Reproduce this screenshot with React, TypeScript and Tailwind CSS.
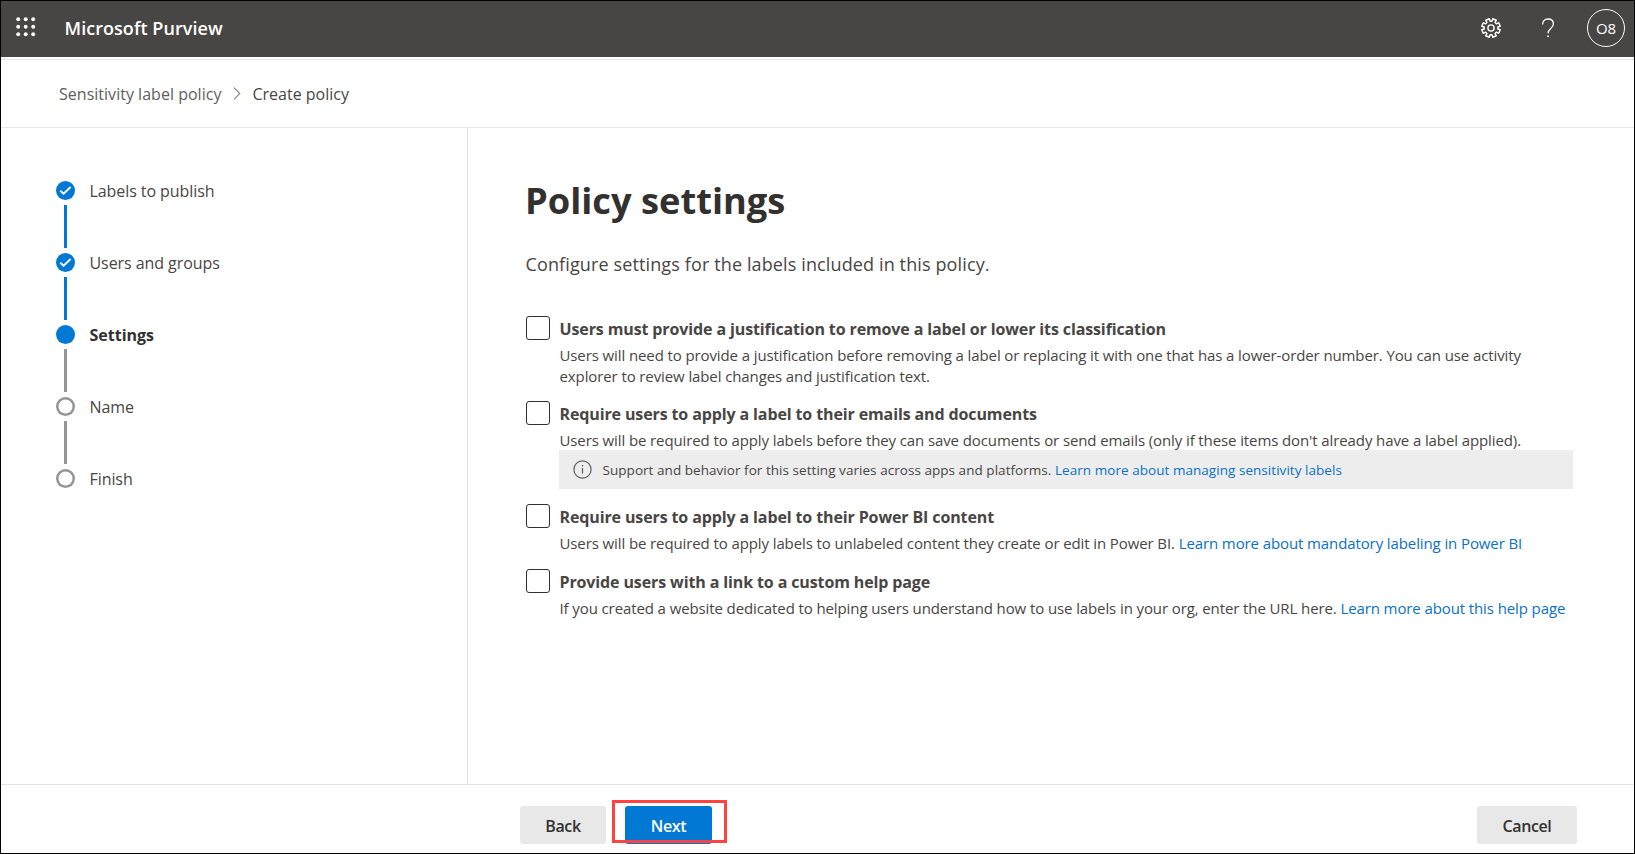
import type { ReactNode } from "react";

type StepState = "done" | "current" | "todo";

const steps: { label: string; state: StepState }[] = [
  { label: "Labels to publish", state: "done" },
  { label: "Users and groups", state: "done" },
  { label: "Settings", state: "current" },
  { label: "Name", state: "todo" },
  { label: "Finish", state: "todo" },
];

// Outline of an eight-tooth cog centred on the origin, with a notch at the top.
const cogPath = (() => {
  const pts: string[] = [];
  for (let i = 0; i < 8; i++) {
    const mid = 22.5 + i * 45;
    const corners: [number, number][] = [
      [mid - 14, 6.9],
      [mid - 12, 9.4],
      [mid + 12, 9.4],
      [mid + 14, 6.9],
    ];
    for (const [deg, r] of corners) {
      const a = (deg * Math.PI) / 180;
      pts.push(`${(r * Math.cos(a)).toFixed(2)} ${(r * Math.sin(a)).toFixed(2)}`);
    }
  }
  return `M${pts.join("L")}Z`;
})();

function Waffle() {
  return (
    <svg width="20" height="20" viewBox="0 0 20 20" fill="white">
      {[2.2, 9.7, 17.2].map((y) =>
        [2.2, 9.7, 17.2].map((x) => <circle key={`${x}-${y}`} cx={x} cy={y} r="1.95" />)
      )}
    </svg>
  );
}

function Header() {
  return (
    <header className="flex h-14 shrink-0 items-center bg-[#484644] pr-[9px] pl-[15px] text-white">
      <div className="mb-1 flex">
        <Waffle />
      </div>
      <h1 className="mb-[2px] ml-[28.5px] text-lg leading-6 font-semibold tracking-[0.05px]">Microsoft Purview</h1>
      <div className="mb-[2px] ml-auto flex items-center">
        <svg className="mb-px" width="22" height="22" viewBox="-11 -11 22 22" fill="none" stroke="white" strokeWidth="1.4" strokeLinejoin="round">
          <path d={cogPath} />
          <circle r="3.1" />
        </svg>
        <svg className="ml-[39px]" width="14" height="20" viewBox="0 0 14 20" fill="none" stroke="white" strokeWidth="1.3">
          <path d="M1.6 6.4C1.6 3 3.8 1 7 1s5.4 1.9 5.4 4.9c0 4.4-5.4 4.8-5.4 9.4" />
          <path d="M7 17.4v1.7" strokeWidth="1.7" />
        </svg>
        <div className="ml-[32px] flex size-[38px] items-center justify-center rounded-full border border-white text-[15px] leading-5 tracking-[-0.1px]">
          O8
        </div>
      </div>
    </header>
  );
}

function Breadcrumb() {
  return (
    <nav className="mt-[2px] flex h-[69px] shrink-0 items-center border-y border-[#e6e6e6] pl-[58px] text-base leading-6">
      <span className="tracking-[0.02px] text-[#605e5c]">Sensitivity label policy</span>
      <svg className="ml-[12px]" width="8" height="13" viewBox="0 0 8 13" fill="none" stroke="#8a8886" strokeWidth="1.1">
        <path d="M1 0.7L6.8 6.5L1 12.3" />
      </svg>
      <span className="ml-[11px] text-[#484644]">Create policy</span>
    </nav>
  );
}

function StepDot({ state }: { state: StepState }) {
  if (state === "todo") return <span className="size-[19px] rounded-full shadow-[inset_0_0_0_2.5px_#979593]" />;
  return (
    <span className="flex size-[19px] items-center justify-center rounded-full bg-[#0078d4]">
      {state === "done" && (
        <svg width="13" height="11" viewBox="0 0 13 11" fill="none" stroke="white" strokeWidth="1.9">
          <path d="M1.3 5.7L4.6 8.7L11.6 2" />
        </svg>
      )}
    </span>
  );
}

function Steps() {
  return (
    <aside className="w-[467px] shrink-0 border-r border-[#e3e3e3] pt-[53px] pl-[55px]">
      <ol>
        {steps.map((s, i) => (
          <li key={s.label}>
            <div className="flex h-[19px] items-center gap-[14.5px]">
              <StepDot state={s.state} />
              <span
                className={
                  s.state === "current"
                    ? "text-base leading-5 font-bold text-[#323130]"
                    : "text-base leading-5 tracking-[-0.07px] text-[#484644]"
                }
              >
                {s.label}
              </span>
            </div>
            {i < steps.length - 1 && (
              <div
                className={
                  s.state === "done"
                    ? "my-[5px] ml-2 h-[43px] w-[3px] bg-[#0078d4]"
                    : "my-[5px] ml-2 h-[43px] w-[3px] bg-[#979593]"
                }
              />
            )}
          </li>
        ))}
      </ol>
    </aside>
  );
}

function Link({ children }: { children: ReactNode }) {
  return (
    <a href="#" className="text-[#0b71c7]">
      {children}
    </a>
  );
}

function Setting({ title, children, note }: { title: string; children: ReactNode; note?: ReactNode }) {
  return (
    <div className="flex">
      <span role="checkbox" aria-checked="false" className="size-6 shrink-0 rounded-[3px] border border-[#323130]" />
      <div className="ml-[9px] grow pt-px">
        <h3 className="pl-[0.5px] text-base leading-6 font-bold tracking-[-0.12px] text-[#484644]">{title}</h3>
        <p className="mt-1 pl-[0.5px] text-[15px] leading-[21px] tracking-[-0.105px] whitespace-nowrap text-[#484644]">
          {children}
        </p>
        {note}
      </div>
    </div>
  );
}

function Note() {
  return (
    <div className="-mt-px flex h-[39px] items-center bg-[#ededed] pl-[14px] text-[13.5px] leading-5 tracking-[0.045px] text-[#484644]">
      <svg className="mr-[10.5px]" width="19" height="19" viewBox="0 0 19 19" fill="none" stroke="#605e5c" strokeWidth="1.2">
        <circle cx="9.5" cy="9.5" r="8.6" />
        <path d="M9.5 8v5.5M9.5 5v1.5" />
      </svg>
      <span>
        Support and behavior for this setting varies across apps and platforms.{" "}
        <Link>Learn more about managing sensitivity labels</Link>
      </span>
    </div>
  );
}

function Content() {
  return (
    <main className="grow pt-[48px] pr-[61px] pl-[58px]">
      <h2 className="-ml-px text-[36.25px] leading-[48px] font-bold text-[#323130]">Policy settings</h2>
      <p className="mt-[28px] -ml-[0.5px] text-lg leading-6 tracking-[0.125px] text-[#484644]">
        Configure settings for the labels included in this policy.
      </p>
      <div className="mt-10 flex flex-col">
        <Setting title="Users must provide a justification to remove a label or lower its classification">
          Users will need to provide a justification before removing a label or replacing it with one that has a
          lower-order number. You can use activity
          <br />
          explorer to review label changes and justification text.
        </Setting>
        <div className="mt-[14px] flex flex-col gap-[15px]">
          <Setting title="Require users to apply a label to their emails and documents" note={<Note />}>
            Users will be required to apply labels before they can save documents or send emails (only if these items
            don't already have a label applied).
          </Setting>
          <Setting title="Require users to apply a label to their Power BI content">
            Users will be required to apply labels to unlabeled content they create or edit in Power BI.{" "}
            <Link>Learn more about mandatory labeling in Power BI</Link>
          </Setting>
          <Setting title="Provide users with a link to a custom help page">
            If you created a website dedicated to helping users understand how to use labels in your org, enter the URL
            here. <Link>Learn more about this help page</Link>
          </Setting>
        </div>
      </div>
    </main>
  );
}

function Footer() {
  return (
    <footer className="flex h-[69px] shrink-0 items-start border-t border-[#e3e3e3] pt-[21px] pr-[57px] pl-[519px] text-base font-semibold tracking-[-0.4px]">
      <button className="h-[38px] w-[86px] rounded-[3px] bg-[#e8e8e8] pt-[2px] text-[#323130]">Back</button>
      <div className="relative ml-[19px]">
        <button className="h-[38px] w-[87px] rounded-[3px] bg-[#0078d4] pt-[2px] text-white">Next</button>
        <div className="absolute -top-[6px] -left-[13px] h-[43px] w-[115px] border-[3px] border-[#ff4343]" />
      </div>
      <button className="ml-auto h-[38px] w-[100px] rounded-[3px] bg-[#e8e8e8] pt-[2px] text-[#323130]">Cancel</button>
    </footer>
  );
}

export default function App() {
  return (
    <div className="flex h-[854px] w-[1635px] flex-col overflow-hidden border border-black bg-white font-['Open_Sans','Noto_Sans',sans-serif]">
      <Header />
      <Breadcrumb />
      <div className="flex grow">
        <Steps />
        <Content />
      </div>
      <Footer />
    </div>
  );
}
